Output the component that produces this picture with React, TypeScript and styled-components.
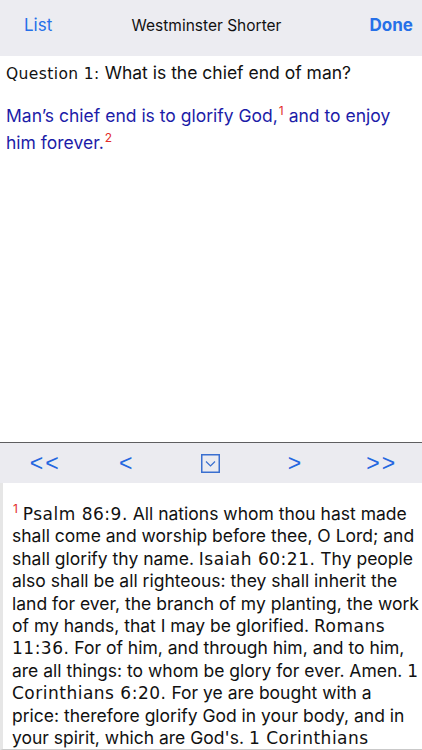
import React from "react";
import styled, { createGlobalStyle } from "styled-components";

const Global = createGlobalStyle`
  html, body { margin: 0; padding: 0; background: #fff; }
  body { font-family: "Inter", "Liberation Sans", sans-serif; -webkit-font-smoothing: antialiased; }
`;

const Screen = styled.div`
  width: 422px;
  height: 750px;
  display: flex;
  flex-direction: column;
  overflow: hidden;
`;

const NavBar = styled.header`
  height: 56px;
  flex: none;
  background: #ececf1;
  display: grid;
  grid-template-columns: 1fr auto 1fr;
  align-items: center;
  padding: 0 9px 6px 0;
  box-sizing: border-box;
`;

const NavButton = styled.span<{ $bold?: boolean; $right?: boolean }>`
  font-size: 17px;
  color: #2670e8;
  font-weight: ${(p) => (p.$bold ? 700 : 400)};
  justify-self: ${(p) => (p.$right ? "end" : "start")};
  margin-left: ${(p) => (p.$right ? "0" : "24px")};
`;

const NavTitle = styled.span`
  font-size: 15.5px;
  color: #111;
`;

const Upper = styled.section`
  flex: 1;
  padding: 5px 8px 0 6px;
  background: #fff;
`;

const Question = styled.p`
  margin: 0 0 17px;
  font-size: 17.5px;
  line-height: 24px;
  color: #111;
`;

const Ref = styled.span<{ $size: number; $spacing: number }>`
  font-family: "DejaVu Sans", "Verdana", sans-serif;
  font-size: ${(p) => p.$size}px;
  letter-spacing: ${(p) => p.$spacing}px;
  color: #111;
`;

const Answer = styled.p`
  margin: 0;
  font-size: 17.5px;
  line-height: 26.5px;
  color: #1c1ca8;
`;

const Sup = styled.sup`
  color: #e22a2a;
  font-size: 12px;
  line-height: 0;
  vertical-align: 0;
  position: relative;
  top: -7px;
  margin-left: 1px;
`;

const Divider = styled.div`
  height: 1px;
  flex: none;
  background: #5e5e60;
`;

const ToolBar = styled.nav`
  height: 40px;
  flex: none;
  background: #ebebf0;
  display: grid;
  grid-template-columns: repeat(5, 1fr);
  align-items: center;
  justify-items: center;
`;

const ToolButton = styled.span<{ $shift?: number }>`
  font-size: 23px;
  color: #2467e0;
  font-family: "Liberation Sans", sans-serif;
  letter-spacing: 2px;
  line-height: 1;
  margin-left: ${(p) => p.$shift ?? 0}px;
`;

const Lower = styled.section`
  height: 267px;
  flex: none;
  box-sizing: border-box;
  border-left: 3px solid #e6e6e6;
  border-bottom: 1px solid #c9c9c9;
  padding: 20px 2px 0 9px;
  overflow: hidden;
  background: #fff;
`;

const Proofs = styled.p`
  margin: 0;
  font-size: 17.5px;
  line-height: 22.4px;
  color: #111;
`;

function BoxIcon() {
  return (
    <svg width="19" height="19" viewBox="0 0 19 19" fill="none">
      <rect x="0.75" y="0.75" width="17.5" height="17.5" stroke="#3a6fd0" strokeWidth="1.5" />
      <path d="M5 7.5 L9.5 12 L14 7.5" stroke="#3a6fd0" strokeWidth="1.2" />
    </svg>
  );
}

export default function App() {
  const r = { $size: 17, $spacing: 0.5 };
  return (
    <>
      <Global />
      <Screen>
        <NavBar>
          <NavButton>List</NavButton>
          <NavTitle>Westminster Shorter</NavTitle>
          <NavButton $bold $right>Done</NavButton>
        </NavBar>
        <Upper>
          <Question>
            <Ref $size={15.5} $spacing={0.4}>Question 1:</Ref> What is the chief end of man?
          </Question>
          <Answer>
            Man’s chief end is to glorify God,<Sup>1</Sup> and to enjoy him forever.<Sup>2</Sup>
          </Answer>
        </Upper>
        <Divider />
        <ToolBar>
          <ToolButton $shift={6}>&lt;&lt;</ToolButton>
          <ToolButton>&lt;</ToolButton>
          <BoxIcon />
          <ToolButton>&gt;</ToolButton>
          <ToolButton $shift={4}>&gt;&gt;</ToolButton>
        </ToolBar>
        <Lower>
          <Proofs>
            <Sup>1</Sup> <Ref {...r}>Psalm 86:9.</Ref> All nations whom thou hast made shall come and worship before thee, O Lord; and shall glorify thy name. <Ref {...r}>Isaiah 60:21.</Ref> Thy people also shall be all righteous: they shall inherit the land for ever, the branch of my planting, the work of my hands, that I may be glorified. <Ref {...r}>Romans 11:36.</Ref> For of him, and through him, and to him, are all things: to whom be glory for ever. Amen. <Ref {...r}>1 Corinthians 6:20.</Ref> For ye are bought with a price: therefore glorify God in your body, and in your spirit, which are God's. <Ref {...r}>1 Corinthians 10:31.</Ref> Whether therefore ye eat, or drink, or whatsoever ye do, do all to the glory of God.
          </Proofs>
        </Lower>
      </Screen>
    </>
  );
}
